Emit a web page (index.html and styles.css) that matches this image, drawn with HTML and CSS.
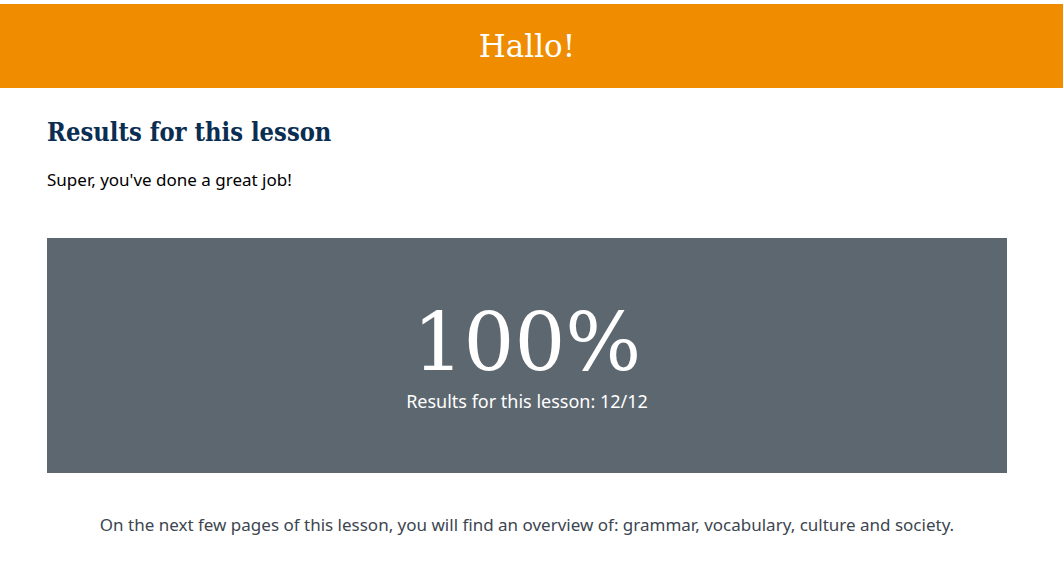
FILE: index.html
```html
<!DOCTYPE html>
<html lang="en">
<head>
<meta charset="utf-8">
<title>Hallo!</title>
<link rel="stylesheet" href="styles.css">
</head>
<body>
<header class="banner">
  <div class="wrap banner-inner"><h1 class="banner-title">Hallo!</h1></div>
</header>
<main class="wrap content">
  <h2 class="title">Results for this lesson</h2>
  <p class="lead">Super, you've done a great job!</p>
  <section class="score">
    <div class="score-value">100%</div>
    <div class="score-label">Results for this lesson: 12/12</div>
  </section>
  <p class="note">On the next few pages of this lesson, you will find an overview of: grammar, vocabulary, culture and society.</p>
</main>
</body>
</html>
```
FILE: styles.css
```css
html, body { margin: 0; padding: 0; background: #fff; }
body { padding-top: 4px; font-family: "Noto Sans", "Open Sans", sans-serif; }
.wrap { width: 960px; margin-left: 47px; }
.banner { background: #f08c00; height: 84px; }
.banner-inner { height: 84px; display: flex; align-items: center; justify-content: center; }
.banner-title { margin: 0; font-family: "DejaVu Serif", serif; font-weight: normal; font-size: 31px; color: #fff; }
.content { display: flex; flex-direction: column; }
.title { margin: 29px 0 0; font-family: "DejaVu Serif", serif; font-stretch: condensed; font-weight: bold; font-size: 25.3px; line-height: 30px; color: #0a2d52; }
.lead { margin: 21px 0 0; font-size: 17px; line-height: 24px; color: #000; }
.score { margin-top: 46px; height: 235px; box-sizing: border-box; padding-top: 63px; background: #5c6770; color: #fff; display: flex; flex-direction: column; align-items: center; }
.score-value { font-family: "DejaVu Serif", serif; font-size: 80px; line-height: 84px; }
.score-label { font-size: 18px; line-height: 24px; margin-top: 4px; }
.note { margin: 40px 0 0; text-align: center; font-size: 17px; line-height: 24px; color: #3c4650; }
```
